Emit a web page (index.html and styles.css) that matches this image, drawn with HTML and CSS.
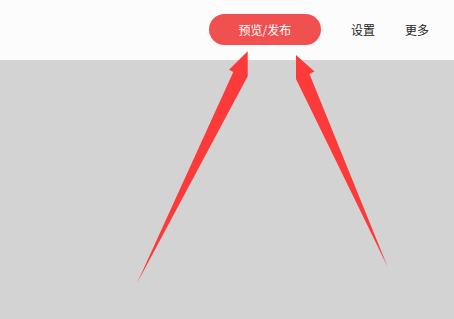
FILE: index.html
```html
<!DOCTYPE html>
<html lang="zh">
<head>
<meta charset="utf-8">
<link rel="stylesheet" href="styles.css">
</head>
<body>
<div class="page">
  <header class="topbar">
    <button class="publish">预览/发布</button>
    <a class="nav-link">设置</a>
    <a class="nav-link">更多</a>
  </header>
  <main class="canvas"></main>
  <svg class="arrows" width="454" height="319" viewBox="0 0 454 319">
    <polygon class="arrow" points="247.7,51.3 247.7,76.3 137,283.3 233.3,72 229,69.7"/>
    <polygon class="arrow" points="296,55 296,79 387.6,266.8 309.5,74 314.5,71.5"/>
  </svg>
</div>
</body>
</html>
```
FILE: styles.css
```css
html, body {
  margin: 0;
  padding: 0;
}
body {
  font-family: "Noto Sans CJK SC", "Noto Sans", sans-serif;
  width: 454px;
  height: 319px;
  overflow: hidden;
}
.page {
  position: relative;
  display: flex;
  flex-direction: column;
  width: 454px;
  height: 319px;
}
.topbar {
  height: 60px;
  flex: 0 0 60px;
  background: #fcfcfc;
  display: flex;
  align-items: center;
  justify-content: flex-end;
  padding-right: 25px;
  gap: 30px;
  box-sizing: border-box;
}
.publish {
  width: 112px;
  height: 31px;
  margin-top: -1px;
  border: none;
  border-radius: 16px;
  background: #f15050;
  color: #ffffff;
  font-family: inherit;
  font-size: 12px;
  padding: 0;
  line-height: 31px;
}
.nav-link {
  font-size: 12px;
  color: #222222;
  line-height: 16px;
}
.canvas {
  flex: 1;
  background: #d3d3d3;
}
.arrows {
  position: absolute;
  left: 0;
  top: 0;
}
.arrow {
  fill: #fd3a3a;
}
```
